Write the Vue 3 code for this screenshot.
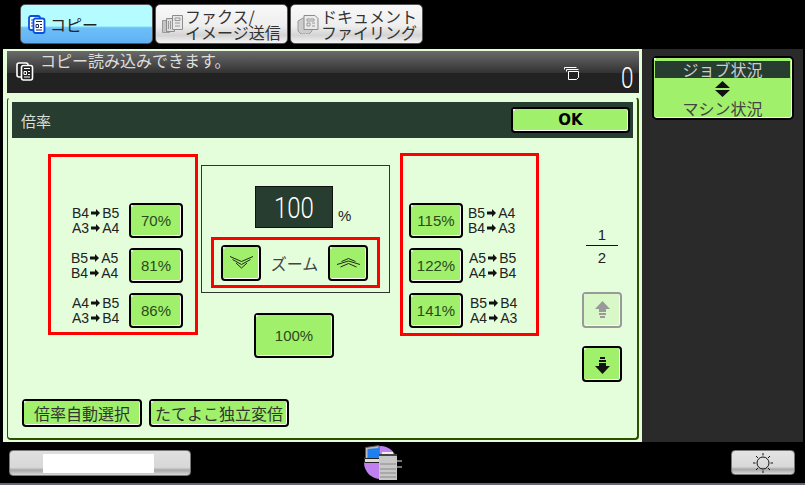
<script setup>
const leftRows = [
  { pct: '70%', l1: ['B4', 'B5'], l2: ['A3', 'A4'], off: 1 },
  { pct: '81%', l1: ['B5', 'A5'], l2: ['B4', 'A4'], off: 0 },
  { pct: '86%', l1: ['A4', 'B5'], l2: ['A3', 'B4'], off: 1 },
]
const rightRows = [
  { pct: '115%', l1: ['B5', 'A4'], l2: ['B4', 'A3'], off: 0 },
  { pct: '122%', l1: ['A5', 'B5'], l2: ['A4', 'B4'], off: 1 },
  { pct: '141%', l1: ['B5', 'B4'], l2: ['A4', 'A3'], off: 2 },
]
</script>

<template>
  <div class="screen">
    <div class="tabs">
      <div class="tab active">
        <svg class="tabicon" width="18" height="19" viewBox="0 0 18 19">
          <rect x="1" y="1" width="11" height="14" rx="2" fill="#fff" stroke="#0a50e0" stroke-width="1.8"/>
          <rect x="5.500" y="3.500" width="11" height="14.500" rx="2" fill="#fff" stroke="#0a50e0" stroke-width="1.8"/>
          <path d="M3 5h2M3 8h2M3 11h2" stroke="#0a50e0"/>
          <path d="M8 6.500h6M8 9.500h2.500v3H8zM12 9.500h2M12 12.500h2M8 15h6" fill="none" stroke="#225"/>
        </svg>
        <span class="tabone">コピー</span>
      </div>
      <div class="tab">
        <svg class="tabicon" width="22" height="19" viewBox="0 0 22 19">
          <path d="M.5 5.500h7v12h-7z" fill="#c4c4c4" stroke="#999"/>
          <path d="M4.500 3.500h8v13h-8z" fill="#dcdcdc" stroke="#8c8c8c"/>
          <path d="M10.500 .5h10v14h-10z" fill="#e8e8e8" stroke="#8c8c8c"/>
          <path d="M6.500 6v8M8.500 6v8M10.500 6v8M13 3h5v2.500h-5zM13 8h5M13 11h5" stroke="#999" fill="none"/>
        </svg>
        <span class="tabtwo">ファクス/<br>イメージ送信</span>
      </div>
      <div class="tab">
        <svg class="tabicon" width="23" height="19" viewBox="0 0 23 19">
          <path d="M1 6l5-3 9 3v10l-3 3H4l-3-3z" fill="#ccc" stroke="#999"/>
          <path d="M7 .5h11l3 3v11H7z" fill="#eaeaea" stroke="#8c8c8c"/>
          <path d="M10 4h7v2h-7zM10 8h3v3h-3zM15 8h3M15 11h3" fill="none" stroke="#999"/>
        </svg>
        <span class="tabtwo">ドキュメント<br>ファイリング</span>
      </div>
    </div>

    <div class="middle">
      <div class="main">
        <div class="status">
          <svg class="staticon" width="18" height="19" viewBox="0 0 18 19">
            <rect x="1" y="1" width="11" height="14" rx="2" fill="#222" stroke="#fff" stroke-width="1.600"/>
            <rect x="5.500" y="3.500" width="11" height="14.500" rx="2" fill="#222" stroke="#fff" stroke-width="1.600"/>
            <path d="M8 6.500h6M8 9.500h2.500v3H8zM12 9.500h2M12 12.500h2M8 15h6" fill="none" stroke="#fff"/>
          </svg>
          <span class="statmsg">コピー読み込みできます。</span>
          <svg class="stack" width="17" height="14" viewBox="0 0 17 14">
            <path d="M1.500 1.500h12M1.500 1.500v2M3.500 3.500h12M3.500 3.500v2" stroke="#fff" fill="none"/>
            <path d="M5.500 5.500h10v6l-2 2h-8z" fill="#222" stroke="#fff"/>
          </svg>
          <span class="count">0</span>
        </div>

        <div class="panel">
          <div class="titlebar">
            <span class="title">倍率</span>
            <div class="btn okbtn">OK</div>
          </div>

          <div class="body">
            <div class="redbox leftbox">
              <div v-for="r in leftRows" :key="r.pct" class="row">
                <div class="lab" :style="{ paddingLeft: r.off + 'px' }">
                  <div class="labline">{{ r.l1[0] }}<svg class="arr" width="9" height="8" viewBox="0 0 9 8"><path d="M0 2.500h5V0l4 4-4 4V5.500H0z" fill="#111"/></svg>{{ r.l1[1] }}</div>
                  <div class="labline">{{ r.l2[0] }}<svg class="arr" width="9" height="8" viewBox="0 0 9 8"><path d="M0 2.500h5V0l4 4-4 4V5.500H0z" fill="#111"/></svg>{{ r.l2[1] }}</div>
                </div>
                <div class="btn pct">{{ r.pct }}</div>
              </div>
            </div>

            <div class="center">
              <div class="zoombox">
                <div class="valrow">
                  <div class="value"><span class="narrow">100</span></div>
                  <span class="percent">%</span>
                </div>
                <div class="redbox zoomctl">
                  <div class="btn arrowbtn">
                    <svg width="23" height="13" viewBox="0 0 23 13">
                      <path d="M0 .5l11.500 5 11.500-5M2.500 3.500l9 5 9-5M6 7l5.500 5L17 7" fill="none" stroke="#111" stroke-width=".9"/>
                    </svg>
                  </div>
                  <span class="zoomtxt">ズーム</span>
                  <div class="btn arrowbtn">
                    <svg width="23" height="10" viewBox="0 0 23 10">
                      <path d="M4.500 3.500L11.500 .5 18.500 3.500M0 6.500L11.500 3 23 6.500M3.500 9L11.500 5.500 19.500 9" fill="none" stroke="#111" stroke-width=".9"/>
                    </svg>
                  </div>
                </div>
              </div>
              <div class="btn hundred">100%</div>
            </div>

            <div class="redbox rightbox">
              <div v-for="r in rightRows" :key="r.pct" class="row">
                <div class="btn pct">{{ r.pct }}</div>
                <div class="lab" :style="{ paddingLeft: r.off + 'px' }">
                  <div class="labline">{{ r.l1[0] }}<svg class="arr" width="9" height="8" viewBox="0 0 9 8"><path d="M0 2.500h5V0l4 4-4 4V5.500H0z" fill="#111"/></svg>{{ r.l1[1] }}</div>
                  <div class="labline">{{ r.l2[0] }}<svg class="arr" width="9" height="8" viewBox="0 0 9 8"><path d="M0 2.500h5V0l4 4-4 4V5.500H0z" fill="#111"/></svg>{{ r.l2[1] }}</div>
                </div>
              </div>
            </div>

            <div class="pager">
              <div class="frac">
                <span class="num">1</span>
                <span class="line"></span>
                <span class="num">2</span>
              </div>
              <div class="btn pagebtn disabled">
                <svg width="15" height="19" viewBox="0 0 15 19">
                  <path d="M7.500 0L15 8h-4v3H4V8H0zM4 12h7v2H4zM5 15h5v2H5z" fill="#999"/>
                </svg>
              </div>
              <div class="btn pagebtn">
                <svg width="15" height="19" viewBox="0 0 15 19">
                  <path d="M7.500 19L15 11h-4V8H4v3H0zM4 5h7v2H4zM5 2h5v2H5z" fill="#111"/>
                </svg>
              </div>
            </div>
          </div>

          <div class="bottombtns">
            <div class="btn wide w1">倍率自動選択</div>
            <div class="btn wide w2">たてよこ独立変倍</div>
          </div>
        </div>
      </div>

      <div class="side">
        <div class="btn jobbtn">
          <div class="jobtop">ジョブ状況</div>
          <svg class="updown" width="15" height="16" viewBox="0 0 15 16">
            <path d="M7.500 0L15 7H0zM0 9h15L7.500 16z" fill="#111"/>
          </svg>
          <div class="jobbot">マシン状況</div>
        </div>
      </div>
    </div>

    <div class="footer">
      <div class="barbtn"><div class="whitefill"></div></div>
      <svg class="machine" width="38" height="35" viewBox="0 0 38 35">
        <circle cx="16.500" cy="17.500" r="16.500" fill="#c080f0"/>
        <path d="M1.500 2.500L15 .5v15H1.500z" fill="#bbb" stroke="#555"/>
        <path d="M3.500 4L15 3v10H3.500z" fill="#1e80f0"/>
        <path d="M.5 13.500h15v4H.5z" fill="#ddd" stroke="#222"/>
        <path d="M15 9h18v26H15z" fill="#c8c8c8"/>
        <path d="M15 9h18v2H15z" fill="#444"/>
        <path d="M18 7h11v2H18z" fill="#eee"/>
        <path d="M16 19h16M16 24h16M16 28h16M16 32h16" stroke="#888"/>
        <path d="M33 15h5v2h-5zM33 21h5v2h-5z" fill="#777"/>
      </svg>
      <div class="sunbtn">
        <svg width="22" height="22" viewBox="0 0 22 22">
          <circle cx="11" cy="11" r="6" fill="none" stroke="#111"/>
          <path d="M11 1v2.500M11 18.500V21M1 11h2.500M18.500 11H21M4 4l2 2M16 16l2 2M18 4l-2 2M6 16l-2 2" stroke="#111"/>
        </svg>
      </div>
    </div>
    <div class="endline"></div>
  </div>
</template>

<style>
html, body { margin: 0; background: #000; }
</style>

<style scoped>
.screen {
  width: 805px;
  height: 485px;
  overflow: hidden;
  background: #000;
  display: flex;
  flex-direction: column;
  font-family: "Liberation Sans", "Noto Sans CJK JP", sans-serif;
  color: #111;
}

.tabs {
  height: 49px;
  box-sizing: border-box;
  padding: 4px 0 0 20px;
  display: flex;
  gap: 2px;
}
.tab {
  width: 133px;
  height: 40px;
  box-sizing: border-box;
  border: 1px solid #555;
  border-radius: 5px;
  background: linear-gradient(#f8f8f8 0, #eee 55%, #d4d4d4 80%, #f4f4f4 100%);
  display: flex;
  align-items: center;
  padding-left: 6px;
  font-family: "Noto Sans CJK JP", sans-serif;
}
.tab.active {
  background: linear-gradient(#b4fcff 0, #b4fcff 55%, #6cc0f8 60%, #60b0f4 100%);
  padding-left: 7px;
}
.tabicon { flex: none; }
.tabone { font-size: 16px; margin-left: 4px; color: #222; }
.tabtwo { font-size: 16px; line-height: 16px; color: #333; margin-left: 1px; white-space: nowrap; }

.middle { display: flex; height: 393px; }
.main {
  width: 639px;
  margin-left: 3px;
  background: #e4fedc;
  box-sizing: border-box;
  padding: 2px 3px 0 4px;
}
.status {
  height: 42px;
  background: linear-gradient(#6a6a6a 0, #333 52%, #222 52%, #222 100%);
  display: flex;
  align-items: flex-start;
  font-family: "Noto Sans CJK JP", sans-serif;
}
.staticon { margin: 11px 0 0 9px; flex: none; }
.statmsg { font-size: 16px; line-height: 20px; color: #ddd; margin: -1px 0 0 6px; white-space: nowrap; }
.stack { margin: 15px 0 0 333px; flex: none; }
.count {
  font-family: Roboto, sans-serif;
  font-size: 30px;
  font-weight: 300;
  line-height: 30px;
  color: #fff;
  margin: 12px 0 0 39px;
  transform: scaleX(.75);
}

.panel {
  margin-top: 4px;
  height: 343px;
  box-sizing: border-box;
  border: 1px solid #333;
  border-width: 1px 2px 2px 1px;
  border-color: #e8fce0 #2e5000 #2e5000 #2e5000;
  border-radius: 4px;
  padding: 4px 4px 0 4px;
}
.titlebar {
  height: 36px;
  background: #263d30;
  display: flex;
  align-items: center;
  justify-content: space-between;
  padding: 0 3px 0 9px;
}
.title { color: #ddd; font-size: 15px; font-family: "Noto Sans CJK JP", sans-serif; }

.btn {
  position: relative;
  box-sizing: border-box;
  background: #a0f06c;
  border: 2px solid #000;
  border-radius: 4px;
  box-shadow: inset 0 -1px 0 #fff, inset -1px 0 0 #fff;
  display: flex;
  align-items: center;
  justify-content: center;
  color: #2a4a1a;
  white-space: nowrap;
}
.btn::before {
  content: "";
  position: absolute;
  left: 0;
  top: 0;
  width: 2px;
  height: 2px;
  background: #e8e8f0;
}
.okbtn {
  width: 119px;
  height: 26px;
  color: #000;
  font-weight: 700;
  font-size: 15px;
  font-family: "DejaVu Sans", sans-serif;
}

.body {
  display: flex;
  align-items: flex-start;
  padding: 16px 0 0 36px;
  height: 248px;
  box-sizing: border-box;
}
.redbox { border: 3px solid #f00; box-sizing: border-box; }
.leftbox {
  width: 150px;
  height: 181px;
  padding: 46px 0 0 20px;
  display: flex;
  flex-direction: column;
  gap: 10px;
}
.rightbox {
  width: 139px;
  height: 183px;
  margin: -1px 0 0 10px;
  padding: 47px 0 0 6px;
  display: flex;
  flex-direction: column;
  gap: 10px;
}
.row { display: flex; align-items: center; height: 35px; }
.leftbox .lab { width: 58px; }
.rightbox .lab { margin-left: 5px; }
.lab { font-size: 14px; line-height: 15px; color: #222; box-sizing: border-box; }
.labline { display: flex; align-items: center; white-space: nowrap; }
.arr { margin: 0 2px; flex: none; }
.pct {
  width: 54px;
  height: 35px;
  font-size: 15px;
  flex: none;
}

.center { width: 189px; margin: 11px 0 0 3px; display: flex; flex-direction: column; align-items: flex-start; }
.zoombox {
  width: 189px;
  height: 128px;
  box-sizing: border-box;
  border: 1px solid #333;
  padding: 20px 0 0 9px;
}
.valrow { display: flex; align-items: flex-end; padding-left: 44px; height: 42px; }
.value {
  width: 78px;
  height: 42px;
  box-sizing: border-box;
  background: #263d30;
  border: 1px solid #111;
  color: #fff;
  display: flex;
  align-items: center;
  justify-content: center;
}
.narrow {
  font-family: Roboto, sans-serif;
  font-size: 30px;
  font-weight: 300;
  transform: scaleX(.8);
}
.percent { font-size: 15px; margin: 0 0 4px 5px; color: #222; line-height: 16px; }
.zoomctl {
  width: 169px;
  height: 51px;
  margin-top: 9px;
  display: flex;
  align-items: center;
  padding: 0 9px 0 7px;
  justify-content: space-between;
}
.arrowbtn { width: 40px; height: 36px; }
.zoomtxt { font-family: "Noto Sans CJK JP", sans-serif; font-size: 16px; color: #444; }
.hundred {
  width: 80px;
  height: 45px;
  margin: 20px 0 0 53px;
  font-size: 15px;
}

.pager { width: 40px; margin: 0 0 0 43px; display: flex; flex-direction: column; align-items: center; }
.frac { margin-top: 72px; display: flex; flex-direction: column; align-items: center; color: #222; height: 46px; }
.num { line-height: 17px; font-size: 15px; }
.line { display: block; width: 32px; height: 1px; background: #111; margin: 2px 0 3px; }
.pagebtn { width: 40px; height: 36px; margin-top: 18px; }
.pagebtn.disabled { margin-top: 20px; border-color: #999; background: #d8f8c8; }

.bottombtns { display: flex; gap: 7px; padding: 13px 0 0 10px; }
.wide {
  height: 28px;
  font-size: 16px;
  font-family: "Noto Sans CJK JP", sans-serif;
  color: #333;
}
.w1 { width: 120px; }
.w2 { width: 140px; }

.side {
  flex: 1;
  margin-right: 2px;
  background: #2a2a2a;
  padding: 7px 0 0 10px;
}
.jobbtn {
  width: 142px;
  height: 64px;
  flex-direction: column;
  justify-content: flex-start;
  font-family: "Noto Sans CJK JP", sans-serif;
  font-size: 16px;
  border-radius: 5px;
  padding: 3px 2px 0 1px;
  color: #444;
}
.jobtop { width: 100%; height: 17px; line-height: 17px; background: #263d30; color: #ccc; text-align: center; }
.updown { margin-top: 3px; display: block; flex: none; }
.jobbot { line-height: 18px; margin-top: 2px; color: #444; }

.footer {
  height: 41px;
  display: flex;
  align-items: flex-start;
  padding: 8px 10px 0 9px;
  box-sizing: border-box;
}
.barbtn {
  width: 183px;
  height: 26px;
  box-sizing: border-box;
  border: 1px solid #777;
  border-radius: 4px;
  background: linear-gradient(#e0e0e0 0, #d8d8d8 68%, #a8a8a8 80%, #d8d8d8 100%);
  padding: 3px 0 0 33px;
}
.whitefill { width: 111px; height: 19px; background: #fff; }
.machine { margin: -5px 0 0 173px; flex: none; }
.sunbtn {
  width: 64px;
  height: 25px;
  margin: 0 0 0 329px;
  box-sizing: border-box;
  border: 1px solid #777;
  border-radius: 4px;
  background: linear-gradient(#e4e4e4 0, #d8d8d8 68%, #a8a8a8 80%, #d8d8d8 100%);
  display: flex;
  align-items: center;
  justify-content: center;
}
.endline { height: 2px; background: #667; }
</style>
